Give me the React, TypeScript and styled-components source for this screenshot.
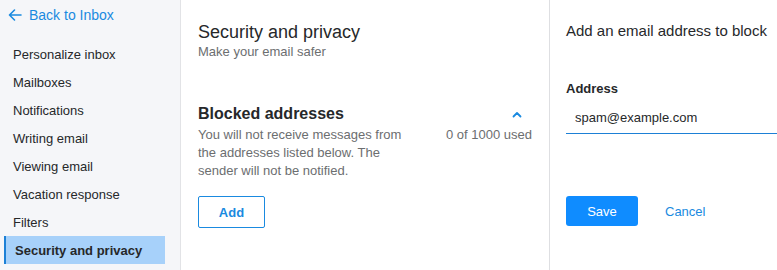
import React from "react";
import styled, { createGlobalStyle } from "styled-components";

const GlobalStyle = createGlobalStyle`
  html, body {
    margin: 0;
    padding: 0;
    overflow: hidden;
  }
  body {
    font-family: "Liberation Sans", Arial, sans-serif;
    color: #26282a;
  }
  * {
    box-sizing: border-box;
  }
`;

const Page = styled.div`
  display: flex;
  width: 777px;
  height: 270px;
  overflow: hidden;
`;

const Sidebar = styled.nav`
  flex: 0 0 181px;
  background: #f5f6f9;
  border-right: 1px solid #e2e3e6;
  padding: 0 15px 0 4px;
`;

const BackLink = styled.a`
  display: flex;
  align-items: center;
  gap: 7px;
  height: 30px;
  padding: 0 0 0 4px;
  color: #1a8ae0;
  font-size: 14px;
  text-decoration: none;
  margin-bottom: 10px;
`;

const NavList = styled.ul`
  list-style: none;
  margin: 0;
  padding: 0;
`;

const NavItem = styled.li<{ $active?: boolean }>`
  height: 28px;
  display: flex;
  align-items: center;
  padding-left: ${(p) => (p.$active ? "9px" : "7px")};
  font-size: 13px;
  color: #26282a;
  font-weight: ${(p) => (p.$active ? 700 : 400)};
  background: ${(p) => (p.$active ? "#a7d1fa" : "transparent")};
  border-left: 2px solid ${(p) => (p.$active ? "#1d80d6" : "transparent")};
`;

const Main = styled.section`
  flex: 0 0 369px;
  background: #fff;
  border-right: 1px solid #dedfe2;
  padding: 21px 17px 0 17px;
`;

const Title = styled.h1`
  margin: 0;
  font-size: 18px;
  font-weight: 400;
  line-height: 22px;
  color: #26282a;
`;

const Subtitle = styled.p`
  margin: 1px 0 0;
  font-size: 13px;
  line-height: 16px;
  color: #6c6e70;
`;

const SectionHead = styled.div`
  display: flex;
  justify-content: space-between;
  align-items: center;
  margin-top: 44px;
  padding-right: 10px;
`;

const SectionTitle = styled.h2`
  margin: 0;
  font-size: 16px;
  font-weight: 700;
  line-height: 20px;
  color: #26282a;
`;

const SectionBody = styled.div`
  display: flex;
  justify-content: space-between;
  align-items: flex-start;
  margin-top: 2px;
`;

const Description = styled.p`
  margin: 0;
  width: 220px;
  font-size: 13px;
  line-height: 18px;
  color: #6c6e70;
`;

const Count = styled.span`
  font-size: 13px;
  line-height: 18px;
  color: #6c6e70;
`;

const OutlineButton = styled.button`
  margin-top: 16px;
  width: 67px;
  height: 32px;
  border: 1px solid #1a8ae0;
  border-radius: 2px;
  background: #fff;
  color: #1a8ae0;
  font-family: inherit;
  font-size: 13px;
  font-weight: 700;
`;

const Side = styled.aside`
  flex: 1 0 240px;
  background: #fff;
  padding: 21px 0 0 16px;
`;

const SideTitle = styled.h2`
  margin: 0;
  font-size: 15px;
  font-weight: 400;
  line-height: 20px;
  white-space: nowrap;
  color: #26282a;
`;

const Label = styled.label`
  display: block;
  margin-top: 40px;
  font-size: 13px;
  font-weight: 700;
  line-height: 16px;
  color: #26282a;
`;

const Input = styled.input`
  display: block;
  width: 100%;
  margin-top: 5px;
  height: 32px;
  border: none;
  border-bottom: 1px solid #1d80d6;
  padding: 0 9px 1px;
  font-family: inherit;
  font-size: 13px;
  color: #26282a;
  outline: none;
`;

const Actions = styled.div`
  display: flex;
  align-items: center;
  gap: 27px;
  margin-top: 62px;
`;

const PrimaryButton = styled.button`
  width: 72px;
  height: 30px;
  border: none;
  border-radius: 3px;
  background: #0f8cff;
  color: #fff;
  font-family: inherit;
  font-size: 13px;
`;

const TextButton = styled.button`
  border: none;
  background: none;
  padding: 0;
  color: #1a8ae0;
  font-family: inherit;
  font-size: 13px;
`;

const navItems = [
  "Personalize inbox",
  "Mailboxes",
  "Notifications",
  "Writing email",
  "Viewing email",
  "Vacation response",
  "Filters",
  "Security and privacy",
];

const ArrowLeft = () => (
  <svg width="14" height="12" viewBox="0 0 14 12" fill="none">
    <path
      d="M13 6H1.5M6.5 1L1.5 6l5 5"
      stroke="#1a8ae0"
      strokeWidth="1.6"
      strokeLinecap="round"
      strokeLinejoin="round"
    />
  </svg>
);

const ChevronUp = () => (
  <svg width="10" height="7" viewBox="0 0 10 7" fill="none">
    <path
      d="M1.5 5.5L5 2l3.5 3.5"
      stroke="#1a8ae0"
      strokeWidth="1.8"
      strokeLinecap="round"
      strokeLinejoin="round"
    />
  </svg>
);

export default function App() {
  return (
    <>
      <GlobalStyle />
      <Page>
        <Sidebar>
          <BackLink href="#">
            <ArrowLeft />
            Back to Inbox
          </BackLink>
          <NavList>
            {navItems.map((item) => (
              <NavItem key={item} $active={item === "Security and privacy"}>
                {item}
              </NavItem>
            ))}
          </NavList>
        </Sidebar>
        <Main>
          <Title>Security and privacy</Title>
          <Subtitle>Make your email safer</Subtitle>
          <SectionHead>
            <SectionTitle>Blocked addresses</SectionTitle>
            <ChevronUp />
          </SectionHead>
          <SectionBody>
            <Description>
              You will not receive messages from the addresses listed below. The
              sender will not be notified.
            </Description>
            <Count>0 of 1000 used</Count>
          </SectionBody>
          <OutlineButton>Add</OutlineButton>
        </Main>
        <Side>
          <SideTitle>Add an email address to block</SideTitle>
          <Label htmlFor="address">Address</Label>
          <Input id="address" defaultValue="spam@example.com" />
          <Actions>
            <PrimaryButton>Save</PrimaryButton>
            <TextButton>Cancel</TextButton>
          </Actions>
        </Side>
      </Page>
    </>
  );
}
